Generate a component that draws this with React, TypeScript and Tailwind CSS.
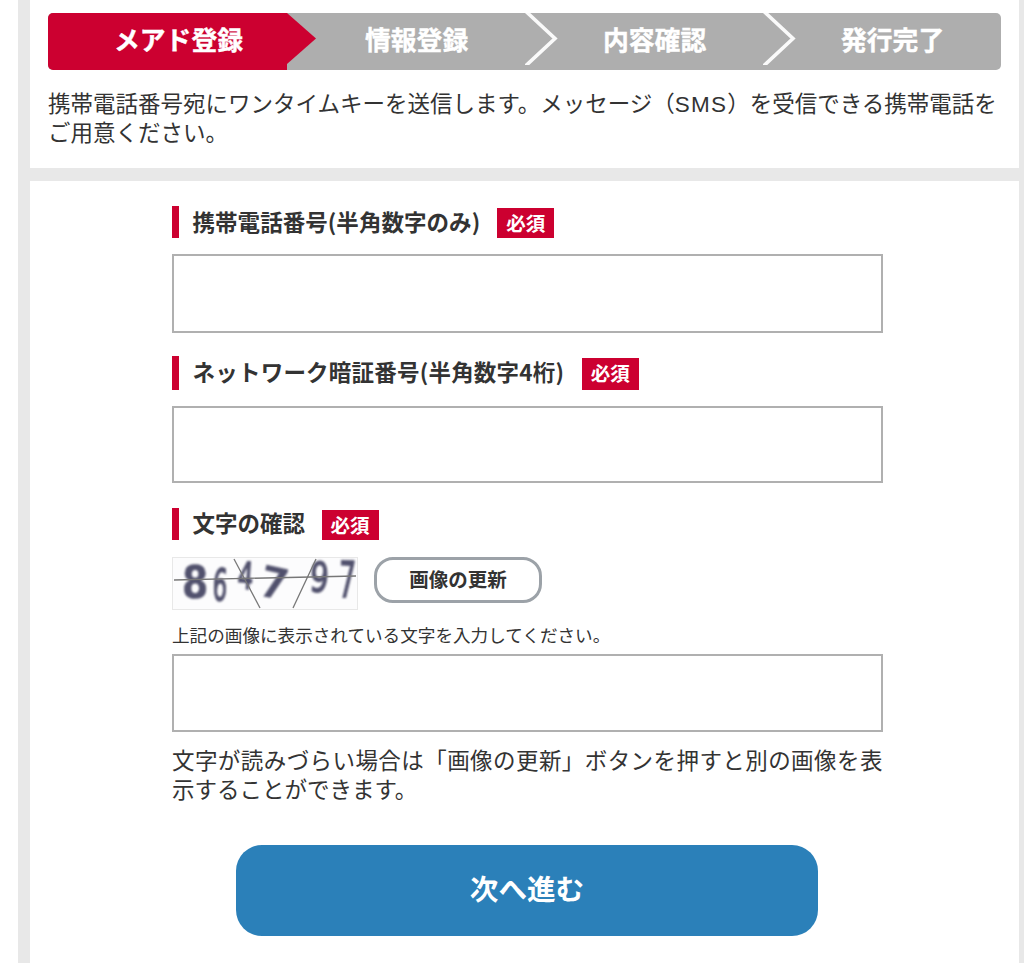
import React from 'react'

type FieldLabelProps = {
    text: string
    className: string
    textClassName: string
    badgeClassName: string
}

const steps = ['情報登録', '内容確認', '発行完了']

const FieldLabel: React.FC<FieldLabelProps> = ({ text, className, textClassName, badgeClassName }) => (
    <div className={`flex border-l-[7px] border-[#cc0030] pl-[13.5px] ${className}`}>
        <span className={`font-['Noto_Sans_CJK_JP',sans-serif] text-[22.5px] font-bold whitespace-nowrap ${textClassName}`}>
            {text}
        </span>
        <span className={`mt-[2px] w-[57px] shrink-0 bg-[#cc0030] text-center text-[19.5px] leading-[32px] font-bold text-white ${badgeClassName}`}>
            必須
        </span>
    </div>
)

const StepBar: React.FC = () => (
    <div className="flex h-[57px] w-[953px] overflow-hidden rounded-[5px] bg-[#aeaeae] text-[25.8px] leading-[57px] font-bold text-white [-webkit-text-stroke:0.4px_white]">
        <div className="w-[239px] shrink-0 bg-[#cc0030] pl-[66px] whitespace-nowrap">メアド登録</div>
        {steps.map((step, i) => (
            <div key={step} className="relative w-[238px] shrink-0 pl-[78px] whitespace-nowrap">
                {i === 0 ? (
                    <svg className="absolute top-0 left-0" width="30" height="57" viewBox="0 0 30 57">
                        <path d="M0 0 L29 25.5 L0 51 Z" fill="#cc0030" />
                    </svg>
                ) : (
                    <svg className="absolute top-0 left-0" width="34" height="52" viewBox="0 0 34 52">
                        <path d="M1 -1.5 L30 25.5 L0 53.5" fill="none" stroke="#fafafa" strokeWidth="3.6" />
                    </svg>
                )}
                {step}
            </div>
        ))}
    </div>
)

// Imagen de verificación con trazos encima
const Captcha: React.FC = () => (
    <svg className="shrink-0 overflow-visible" width="186" height="53" viewBox="0 0 186 53" fontFamily="DejaVu Sans, sans-serif">
        <rect x="0.5" y="0.5" width="185" height="52" fill="#fcfcfd" stroke="#e8e8e8" />
        <g fill="#51516d" stroke="#51516d" strokeWidth="1.6" style={{ filter: 'blur(0.8px)' }}>
            <text transform="translate(10 40.5) scale(0.86 1)" fontSize="44" fontWeight="bold" strokeWidth="0.5">8</text>
            <text transform="translate(40 43) rotate(3) scale(0.52 1)" fontSize="44">6</text>
            <text transform="translate(65 31) rotate(4) scale(0.66 1)" fontSize="37">4</text>
            <text transform="translate(86 37) rotate(12) scale(1.05 1)" fontSize="40" strokeWidth="2.4">7</text>
            <text transform="translate(137 34) rotate(4) scale(0.72 1)" fontSize="41">9</text>
            <text transform="translate(166 40) rotate(2) scale(0.54 1)" fontSize="50">7</text>
        </g>
        <g stroke="#777" strokeWidth="1.3" fill="none">
            <path d="M2 23 L184 19" />
            <path d="M62 2 L88 51" />
            <path d="M144 2 L121 51" />
        </g>
    </svg>
)

const App: React.FC = () => {
    return (
        <div className="h-[963px] w-[1024px] overflow-hidden bg-white font-['Liberation_Sans','Noto_Sans_CJK_JP',sans-serif] text-[#333]">
            <div className="ml-[18px] h-full bg-[#e8e8e8] pr-[5px] pl-3">
                <div className="h-[168px] bg-white pt-[12.5px] pl-[18px]">
                    <StepBar />
                    <p className="mt-[20.5px] text-[22.5px] leading-[29px] whitespace-nowrap">
                        携帯電話番号宛にワンタイムキーを送信します。メッセージ（<span className="tracking-[1.2px]">SMS</span>）を受信できる携帯電話を
                        <br />
                        ご用意ください。
                    </p>
                </div>

                <div className="mt-[13px] h-[782px] bg-white pt-[25px] pl-[142px]">
                    <FieldLabel
                        text="携帯電話番号(半角数字のみ)"
                        className="h-[32px]"
                        textClassName="leading-[31px] tracking-[0.05px]"
                        badgeClassName="ml-[17px] h-[30px]"
                    />
                    <input className="mt-4 block h-[79px] w-[711px] border-2 border-[#b0b0b0] bg-white outline-none" />

                    <FieldLabel
                        text="ネットワーク暗証番号(半角数字4桁)"
                        className="mt-[23px] h-[34px]"
                        textClassName="leading-[31px] tracking-[0.22px]"
                        badgeClassName="ml-[17.5px] h-[32px]"
                    />
                    <input className="mt-4 block h-[77px] w-[711px] border-2 border-[#b0b0b0] bg-white outline-none" />

                    <FieldLabel
                        text="文字の確認"
                        className="mt-[25px] h-[32px]"
                        textClassName="leading-[28px]"
                        badgeClassName="ml-[16.5px] h-[30px]"
                    />
                    <div className="mt-[17px] flex h-[53px] items-start">
                        <Captcha />
                        <button className="ml-4 h-[46px] w-[168px] rounded-[19px] border-[3px] border-[#9ca2a8] bg-white text-[19.5px] leading-[38px] font-bold">
                            画像の更新
                        </button>
                    </div>
                    <p className="mt-[13px] text-[17.6px] leading-[26px] whitespace-nowrap">
                        上記の画像に表示されている文字を入力してください。
                    </p>
                    <input className="mt-[5px] block h-[78px] w-[711px] border-2 border-[#b0b0b0] bg-white outline-none" />
                    <p className="mt-[15px] text-[22.5px] leading-[29px] whitespace-nowrap">
                        <span className="tracking-[0.43px]">文字が読みづらい場合は「画像の更新」ボタンを押すと別の画像を表</span>
                        <br />
                        示することができます。
                    </p>
                    <button className="mt-[40px] ml-[64px] block h-[91px] w-[582px] rounded-[26px] bg-[#2b80b9] text-[28.6px] leading-[91px] font-bold text-white">
                        次へ進む
                    </button>
                </div>
            </div>
        </div>
    )
}

export default App
